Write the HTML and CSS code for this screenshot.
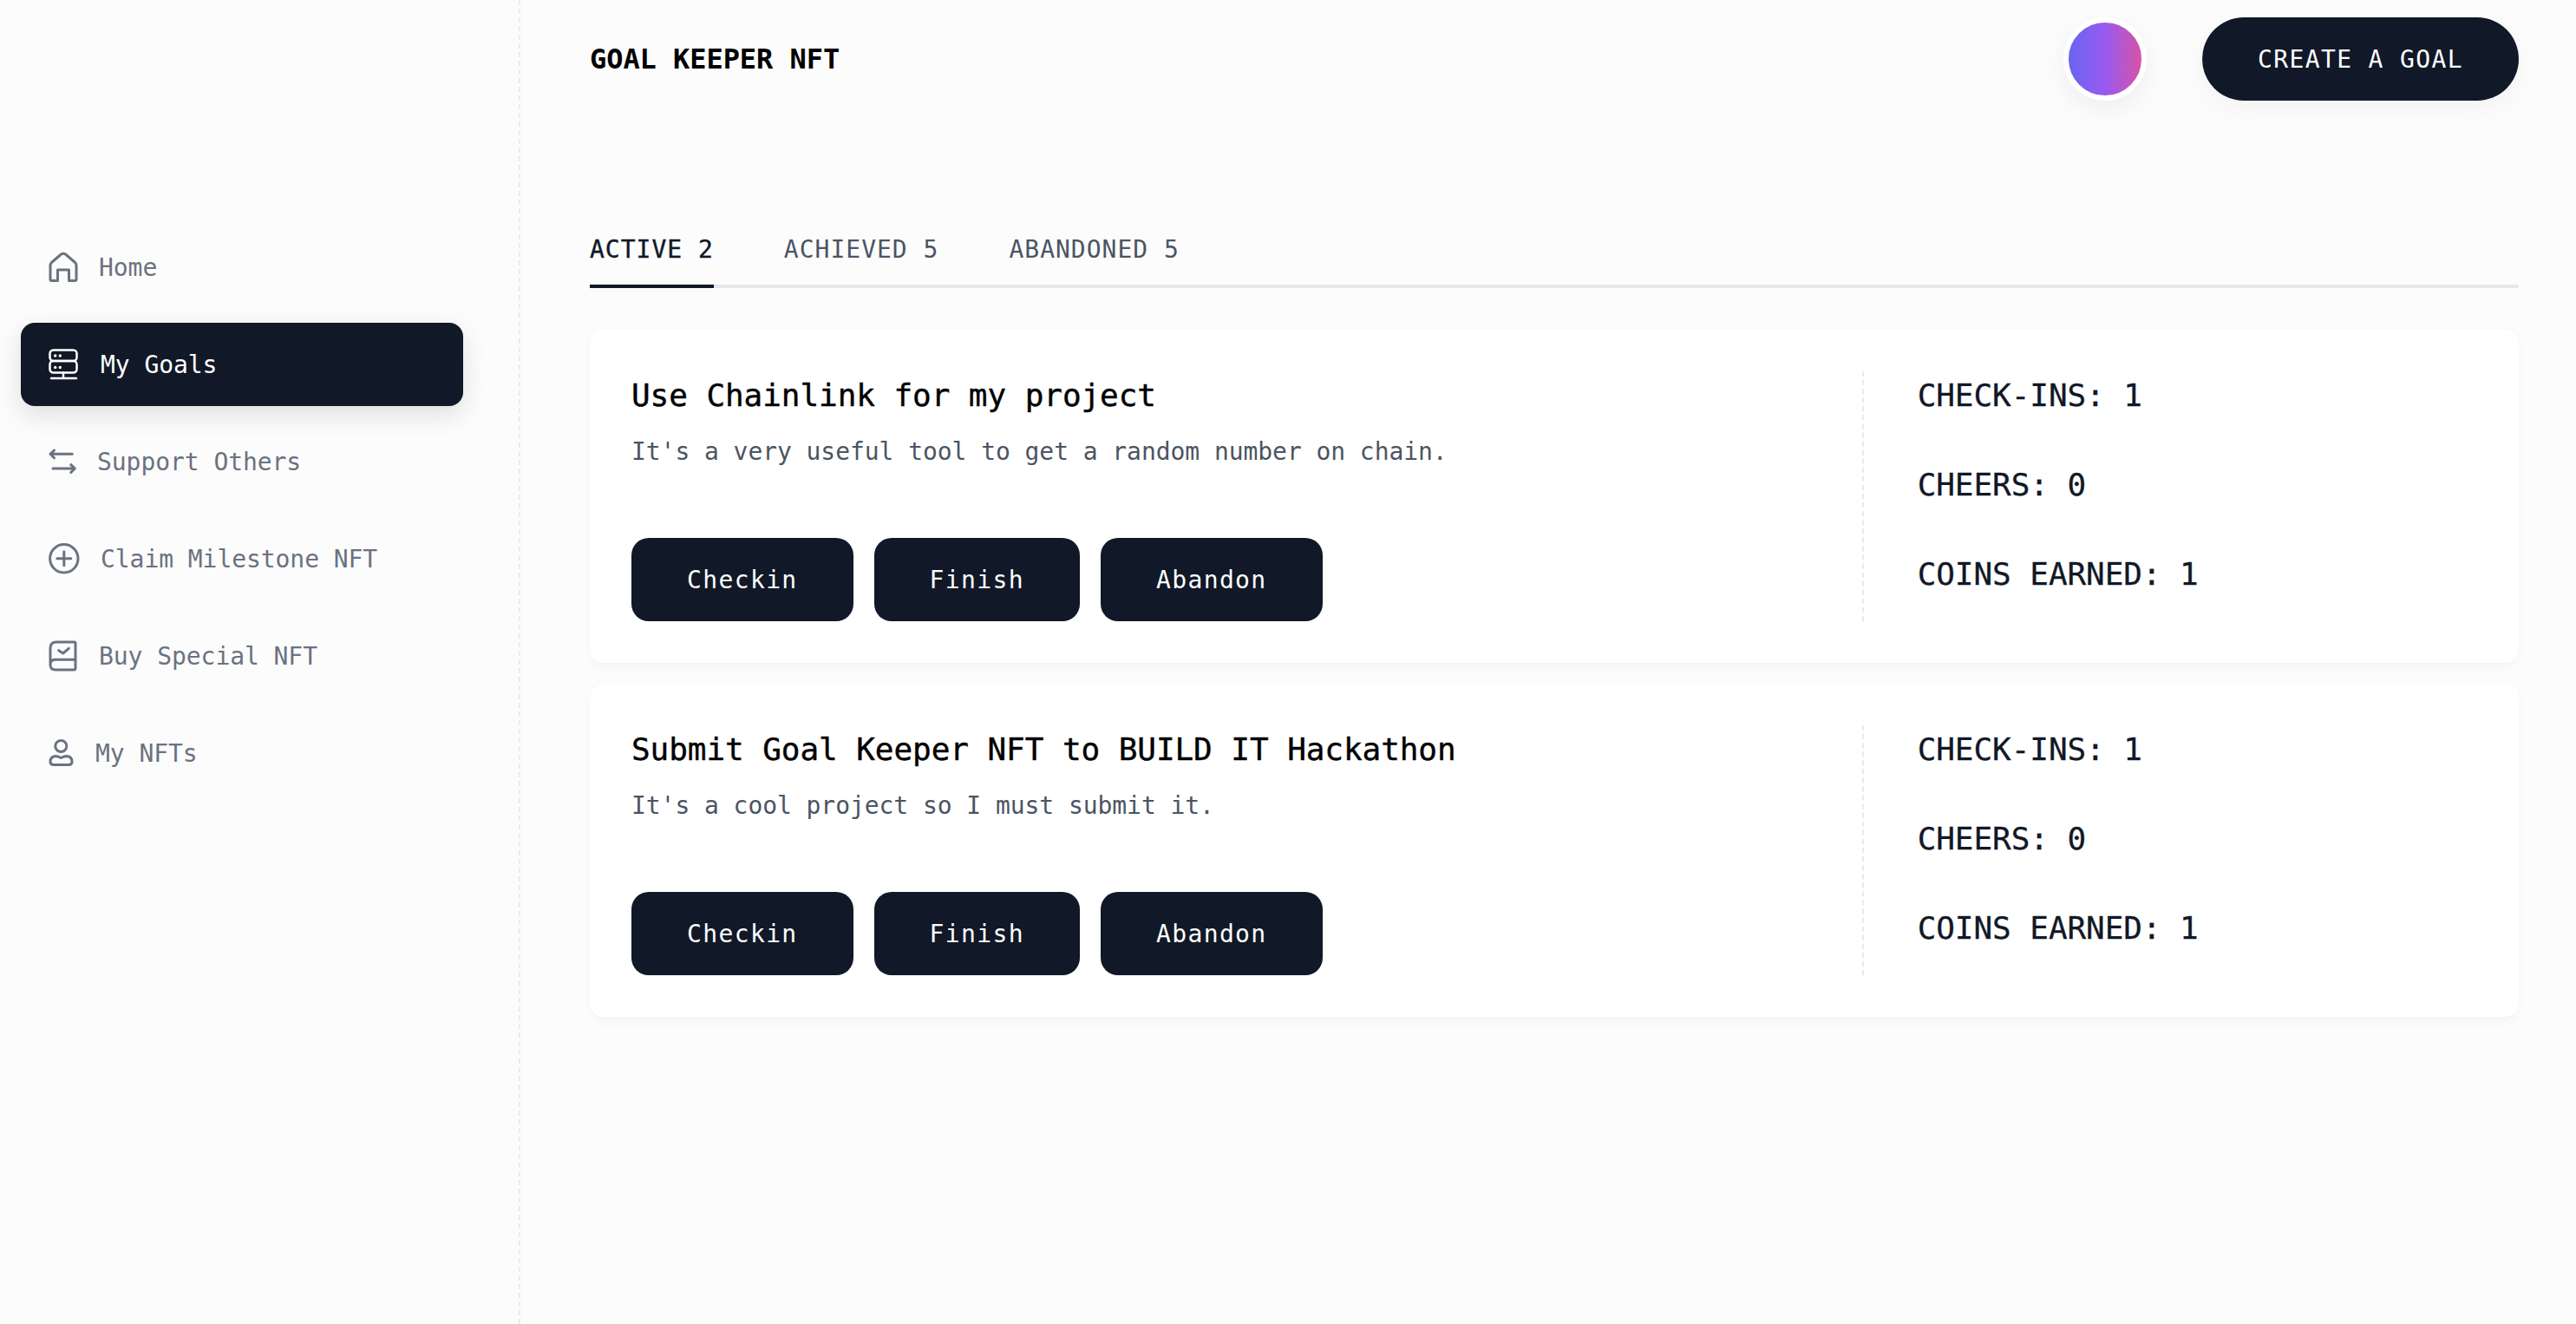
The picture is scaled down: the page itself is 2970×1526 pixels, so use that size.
FILE: index.html
```html
<!DOCTYPE html>
<html lang="en">
<head>
  <meta charset="UTF-8" />
  <title>Goal Keeper NFT</title>
  <link rel="stylesheet" href="styles.css">
</head>
<body>
  <div class="layout">
    <aside class="sidebar">
      <nav class="nav">
        <a class="nav-item">
          <svg class="icon" width="34" height="36" viewBox="0 0 34 36"><path d="M2 32V16Q2 14 3.5 12.5L14.5 3Q17 1.5 19.5 3L30.5 12.5Q32 14 32 16V32Q32 33.5 30.5 33.5H23.5V21H10.5V33.5H3.5Q2 33.5 2 32Z"/></svg>
          <span>Home</span>
        </a>
        <a class="nav-item active">
          <svg class="icon" width="36" height="36" viewBox="0 0 36 36"><rect x="1.5" y="1.5" width="31" height="12.5" rx="4"/><rect x="1.5" y="14" width="31" height="13.5" rx="4"/><path d="M17 27.5V34M3 34H32"/><circle class="dot" cx="7.7" cy="8" r="1.7"/><circle class="dot" cx="13.3" cy="8" r="1.7"/><circle class="dot" cx="7.7" cy="21.5" r="1.7"/><circle class="dot" cx="13.3" cy="21.5" r="1.7"/></svg>
          <span>My Goals</span>
        </a>
        <a class="nav-item">
          <svg class="icon" width="32" height="36" viewBox="0 0 32 36"><path d="M2 9.3H27.3M6.5 5L2 9.3L6.5 13.8M5 26H30M25.8 21.7L30.3 26L25.8 30.5"/></svg>
          <span>Support Others</span>
        </a>
        <a class="nav-item">
          <svg class="icon" width="36" height="36" viewBox="0 0 36 36"><circle cx="17.8" cy="17.8" r="16.2"/><path d="M9.8 17.8H25.8M17.8 9.8V25.8"/></svg>
          <span>Claim Milestone NFT</span>
        </a>
        <a class="nav-item">
          <svg class="icon" width="34" height="36" viewBox="0 0 34 36"><path d="M2 28V9Q2 2 9 2H29.5Q31 2 31 3.5V32Q31 34 29 34H8Q2 34 2 28Q2 22.3 8 22.3H31M11.7 11.7L16.7 15L23.3 9.3"/></svg>
          <span>Buy Special NFT</span>
        </a>
        <a class="nav-item">
          <svg class="icon" width="30" height="36" viewBox="0 0 30 36"><circle cx="14.3" cy="10" r="6.5"/><path d="M2 28Q2 22 8 21.5Q11 21.5 14.3 23.5Q18 21.5 21 21.5Q27 22 27 28Q27 31.5 23 31.5H6Q2 31.5 2 28Z"/></svg>
          <span>My NFTs</span>
        </a>
      </nav>
    </aside>

    <main class="main">
      <header class="header">
        <div class="brand">GOAL KEEPER NFT</div>
        <div class="header-right">
          <div class="avatar"></div>
          <button class="btn-create">CREATE A GOAL</button>
        </div>
      </header>

      <div class="tabs">
        <a class="tab active">ACTIVE 2</a>
        <a class="tab">ACHIEVED 5</a>
        <a class="tab">ABANDONED 5</a>
      </div>

      <section class="goal-list">
        <article class="goal-card">
          <div class="goal-info">
            <h3>Use Chainlink for my project</h3>
            <p>It's a very useful tool to get a random number on chain.</p>
            <div class="goal-actions">
              <button class="btn">Checkin</button>
              <button class="btn">Finish</button>
              <button class="btn">Abandon</button>
            </div>
          </div>
          <div class="goal-stats">
            <div>CHECK-INS: 1</div>
            <div>CHEERS: 0</div>
            <div>COINS EARNED: 1</div>
          </div>
        </article>

        <article class="goal-card">
          <div class="goal-info">
            <h3>Submit Goal Keeper NFT to BUILD IT Hackathon</h3>
            <p>It's a cool project so I must submit it.</p>
            <div class="goal-actions">
              <button class="btn">Checkin</button>
              <button class="btn">Finish</button>
              <button class="btn">Abandon</button>
            </div>
          </div>
          <div class="goal-stats">
            <div>CHECK-INS: 1</div>
            <div>CHEERS: 0</div>
            <div>COINS EARNED: 1</div>
          </div>
        </article>
      </section>
    </main>
  </div>
</body>
</html>
```
FILE: styles.css
```css
* {
  box-sizing: border-box;
}

body {
  margin: 0;
  background-color: #fcfcfc;
  font-family: "DejaVu Sans Mono", "Liberation Mono", monospace;
  color: #111827;
}

.layout {
  display: flex;
  min-height: 1526px;
}

.sidebar {
  width: 600px;
  flex-shrink: 0;
  padding: 260px 64px 0 24px;
  border-right: 2px dashed #e9eaee;
}

.nav {
  display: flex;
  flex-direction: column;
  gap: 16px;
}

.nav-item {
  display: flex;
  align-items: center;
  gap: 24px;
  height: 96px;
  padding-left: 32px;
  border-radius: 16px;
  font-size: 28px;
  letter-spacing: -0.06px;
  color: #6b7280;
}

.nav-item.active {
  background-color: #111827;
  color: #ffffff;
  box-shadow: 0 10px 30px rgba(0, 0, 0, 0.12);
}

.icon {
  flex-shrink: 0;
  fill: none;
  stroke: currentColor;
  stroke-width: 3;
  stroke-linejoin: round;
  stroke-linecap: round;
}

.icon .dot {
  fill: currentColor;
  stroke: none;
}

.active .icon {
  stroke-width: 2.5;
}

.main {
  flex: 1;
  min-width: 0;
  padding: 0 66px 0 80px;
}

.header {
  display: flex;
  align-items: center;
  justify-content: space-between;
  height: 136px;
}

.brand {
  font-size: 32px;
  font-weight: bold;
  letter-spacing: -0.06px;
  color: #000000;
}

.header-right {
  display: flex;
  align-items: center;
  gap: 64px;
}

.avatar {
  width: 96px;
  height: 96px;
  border: 6px solid #ffffff;
  border-radius: 50%;
  background: linear-gradient(to right, #6366f1, #985af0 50%, #e0529c);
  background-origin: border-box;
  box-shadow: 0 10px 30px rgba(0, 0, 0, 0.06);
}

.btn-create {
  height: 96px;
  padding: 0 64px;
  border: none;
  border-radius: 48px;
  background-color: #111827;
  color: #ffffff;
  font-family: inherit;
  font-size: 28px;
  letter-spacing: 1.37px;
  box-shadow: 0 10px 30px rgba(0, 0, 0, 0.04);
}

.tabs {
  display: flex;
  gap: 81px;
  margin-top: 132px;
  border-bottom: 4px solid #e5e7eb;
}

.tab {
  height: 64px;
  margin-bottom: -4px;
  border-bottom: 4px solid transparent;
  font-size: 28px;
  line-height: 40px;
  letter-spacing: 1px;
  color: #4b5563;
}

.tab.active {
  border-bottom-color: #111827;
  color: #111827;
  -webkit-text-stroke: 0.4px #111827;
}

.goal-list {
  display: flex;
  flex-direction: column;
  gap: 24px;
  margin-top: 48px;
}

.goal-card {
  display: grid;
  grid-template-columns: 2fr 1fr;
  height: 384px;
  padding: 48px;
  border-radius: 16px;
  background-color: #ffffff;
  box-shadow: 0 8px 16px -4px rgba(0, 0, 0, 0.04), 0 0 12px rgba(0, 0, 0, 0.015);
}

.goal-info {
  display: flex;
  flex-direction: column;
}

.goal-info h3 {
  margin: 0;
  font-size: 36px;
  font-weight: normal;
  line-height: 56px;
  letter-spacing: -0.07px;
  color: #000000;
  -webkit-text-stroke: 0.4px #000000;
}

.goal-info p {
  margin: 17px 0 0;
  font-size: 28px;
  line-height: 40px;
  letter-spacing: -0.06px;
  color: #4b5563;
}

.goal-actions {
  display: flex;
  gap: 24px;
  margin-top: auto;
}

.btn {
  height: 96px;
  padding: 0 64px;
  border: none;
  border-radius: 20px;
  background-color: #111827;
  color: #ffffff;
  font-family: inherit;
  font-size: 28px;
  letter-spacing: 1.37px;
}

.goal-stats {
  display: flex;
  flex-direction: column;
  gap: 47px;
  padding-left: 62px;
  border-left: 2px dashed #e9eaee;
  font-size: 36px;
  line-height: 56px;
  letter-spacing: -0.07px;
  -webkit-text-stroke: 0.3px #111827;
}
```
